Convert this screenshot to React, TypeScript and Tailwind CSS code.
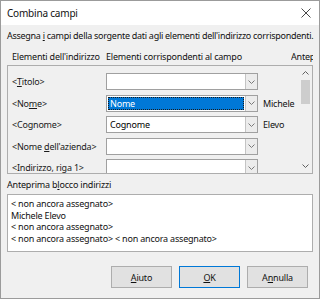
const Chevron = ({ up = false }: { up?: boolean }) => (
  <svg width="7" height="4" viewBox="0 0 7 4" className={up ? "rotate-180" : ""}>
    <path d="M0.5 0.5 L3.5 3.5 L6.5 0.5" fill="none" stroke="currentColor" strokeWidth="1" />
  </svg>
)

const Combo = ({ value = "", selected = false }: { value?: string; selected?: boolean }) => (
  <div className="flex h-[17px] w-[152px] shrink-0 border border-[#a0a0a0] bg-white">
    <div className="flex-1 p-px">
      <div
        className={
          selected
            ? "flex h-full items-center border border-dotted border-[#1b1b1b] bg-[#0078d7] pl-px text-white"
            : "flex h-full items-center pl-[2px] text-black"
        }
      >
        {value}
      </div>
    </div>
    <div className="flex w-[12px] items-center justify-center border-l border-[#c4c4c4] bg-[#ececec] text-[#7a7a7a]">
      <Chevron />
    </div>
  </div>
)

const rows = [
  { label: <>&lt;<u>T</u>itolo&gt;</>, value: "", preview: "" },
  { label: <>&lt;No<u>m</u>e&gt;</>, value: "Nome", preview: "Michele", selected: true },
  { label: <>&lt;Cognome&gt;</>, value: "Cognome", preview: "Elevo" },
  { label: <>&lt;Nome <u>d</u>ell'azienda&gt;</>, value: "", preview: "" },
  { label: <>&lt;Indirizzo, riga 1&gt;</>, value: "", preview: "" },
]

export default function App() {
  return (
    <div className="flex h-[299px] w-[320px] flex-col overflow-hidden border border-[#9b9b9b] bg-[#f0f0f0] font-['Noto_Sans',sans-serif] text-[9px] leading-[11px] tracking-[-0.2px] text-[#111]">
      <div className="flex h-[24px] shrink-0 items-center justify-between bg-white pl-[6px] pr-[8px] text-[10px]">
        <span>Combina campi</span>
        <svg width="10" height="10" viewBox="0 0 10 10">
          <path d="M0.5 0.5 L9.5 9.5 M9.5 0.5 L0.5 9.5" stroke="#333" strokeWidth="0.9" />
        </svg>
      </div>

      <div className="flex flex-1 flex-col px-[6px]">
        <div className="mt-[5px] whitespace-nowrap tracking-[-0.28px]">
          Assegna <u>i</u> campi della sorgente dati agli elementi dell'indirizzo corrispondenti.
        </div>

        <div className="mt-[10px] flex whitespace-nowrap">
          <span className="w-[99px] pl-[5px]">Elementi dell'indirizzo</span>
          <span className="flex-1">Elementi corrispondenti al campo</span>
          <span className="w-[22px] overflow-hidden">Antep</span>
        </div>

        <div className="mt-[3px] flex h-[109px] border border-[#adadad]">
          <div className="flex flex-1 flex-col gap-[4.5px] overflow-hidden pt-[7px]">
            {rows.map((r, i) => (
              <div key={i} className="flex shrink-0 items-center">
                <span className="w-[98px] shrink-0 pl-[4px] text-[#1a1a1a]">{r.label}</span>
                <Combo value={r.value} selected={r.selected} />
                <span className="pl-[5px]">{r.preview}</span>
              </div>
            ))}
          </div>
          <div className="flex w-[13px] flex-col items-center bg-[#f0f0f0] text-[#606060]">
            <div className="flex h-[14px] items-center">
              <Chevron up />
            </div>
            <div className="h-[24px] w-[9px] bg-[#cdcdcd]" />
            <div className="flex-1" />
            <div className="flex h-[14px] items-center">
              <Chevron />
            </div>
          </div>
        </div>

        <div className="mt-[5px]">
          Anteprima b<u>l</u>occo indirizzi
        </div>

        <div className="mt-[4px] flex h-[58px] flex-col border border-[#adadad] bg-white px-[3px] pt-[3px] leading-[11.5px]">
          <div>&lt; non ancora assegnato&gt;</div>
          <div>Michele Elevo</div>
          <div>&lt; non ancora assegnato&gt;</div>
          <div>&lt; non ancora assegnato&gt; &lt; non ancora assegnato&gt;</div>
        </div>

        <div className="mt-[14px] flex justify-end gap-[7px] pr-[5px]">
          <button className="h-[22px] w-[61px] border border-[#adadad] bg-[#e1e1e1]">
            <u>A</u>iuto
          </button>
          <button className="h-[22px] w-[61px] border border-[#0078d7] bg-[#e1e1e1]">
            <u>O</u>K
          </button>
          <button className="h-[22px] w-[61px] border border-[#adadad] bg-[#e1e1e1]">
            A<u>n</u>nulla
          </button>
        </div>
      </div>
    </div>
  )
}
